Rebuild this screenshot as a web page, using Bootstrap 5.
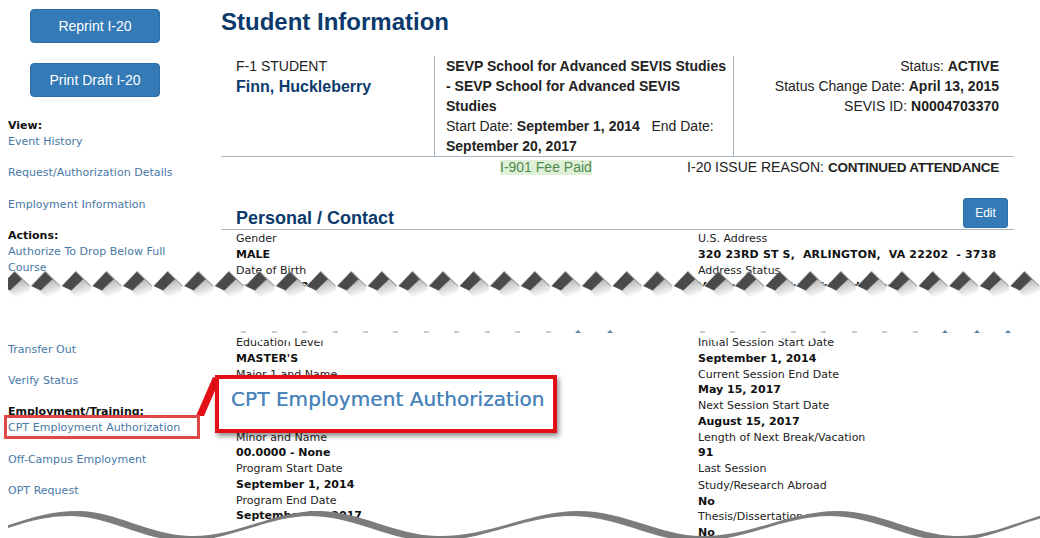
<!DOCTYPE html>
<html lang="en">
<head>
<meta charset="utf-8">
<title>Student Information</title>
<link rel="stylesheet" href="https://cdn.jsdelivr.net/npm/bootstrap@5.3.0/dist/css/bootstrap.min.css">
<style>
html,body{height:538px;overflow:hidden;background:#fff}
body{position:relative;font-family:"Liberation Sans",Arial,sans-serif;font-size:14px;color:#222}
.side-col{width:221px;flex:none;padding:9px 30px 0 8px;font-family:"DejaVu Sans",Verdana,sans-serif;font-size:11px;line-height:16px}
.side-btn{display:block;width:130px;height:34px;margin:0 0 20px 22px;padding:0;background:#337ab7;border:1px solid #2e6da4;border-radius:4px;color:#fff;font-family:"Liberation Sans",Arial,sans-serif;font-size:14px;line-height:32px}
.side-head{font-weight:700;color:#111;display:block}
.side-link{display:block;color:#4878a6;text-decoration:none;margin-bottom:15.25px;letter-spacing:.03px}
.side-gap{height:50.75px}
.side-first{margin-top:21px}
.main-col{width:793px;flex:none;padding-top:7px}
.page-title{font-size:24px;line-height:30px;font-weight:700;color:#0c3a6c;margin:0 0 19px}
.info-band{height:101px;border-bottom:1px solid #a9b5c0;line-height:20px}
.info-a{width:213px;padding-left:15px}
.info-b{width:299px;padding-left:11px;padding-right:0;border-left:1px solid #a9b5c0}
.info-c{width:281px;padding-right:15px;border-left:1px solid #a9b5c0;text-align:right}
.info-name{font-size:16px;line-height:22px;font-weight:700;color:#0c3a6c}
.fee-band{height:20px;line-height:20px;padding:0 15px 0 279px}
.fee-tag{background:#dff0d8;color:#4f8a4f;line-height:15px;display:inline-block;align-self:center}
.reason-val{font-size:13.5px;letter-spacing:-.22px}
.sect-head{margin-top:21px;height:32px;border-bottom:1px solid #a9b5c0;padding:0 6px 0 15px}
.sect-title{font-size:18px;line-height:22px;font-weight:700;color:#0c3a6c;margin:0;align-self:flex-end}
.edit-btn{width:45px;height:30px;padding:0;background:#337ab7;border:1px solid #2e6da4;border-radius:3px;color:#fff;font-size:12px;line-height:28px}
.data-grid{font-family:"DejaVu Sans",Verdana,sans-serif;font-size:11px;color:#222}
.data-grid b{display:block;color:#111}
.data-grid span{display:block}
.data-l{width:477px;padding-left:15px}
.data-r{width:316px}
.top-grid{line-height:16px;margin-top:1px}
.low-grid{line-height:15.75px;margin-top:40.2px}
.data-grid .addr-val{letter-spacing:.15px}
.extra-gap{margin-bottom:1px}
.tear-art{position:absolute;left:0;top:0;pointer-events:none}
.pick-box{position:absolute;left:4px;top:415px;width:196px;height:24px;border:3px solid #e04848}
.zoom-box{position:absolute;left:215px;top:375px;width:342px;height:58px;background:#fff;border:4px solid #e30f17;box-shadow:2px 3px 5px rgba(0,0,0,.45);font-family:"DejaVu Sans",Verdana,sans-serif;font-size:20px;line-height:40px;letter-spacing:.07px;color:#4a84bb;padding-left:12px;white-space:nowrap;text-shadow:0 0 .4px #4a84bb}
</style>
</head>
<body>
<div class="d-flex">
  <nav class="side-col">
    <a class="btn side-btn" href="#">Reprint I-20</a>
    <a class="btn side-btn" href="#">Print Draft I-20</a>
    <strong class="side-head side-first">View:</strong>
    <a class="side-link" href="#">Event History</a>
    <a class="side-link" href="#">Request/Authorization Details</a>
    <a class="side-link" href="#">Employment Information</a>
    <strong class="side-head">Actions:</strong>
    <a class="side-link" href="#">Authorize To Drop Below Full Course</a>
    <div class="side-gap"></div>
    <a class="side-link" href="#">Transfer Out</a>
    <a class="side-link" href="#">Verify Status</a>
    <strong class="side-head">Employment/Training:</strong>
    <a class="side-link" href="#">CPT Employment Authorization</a>
    <a class="side-link" href="#">Off-Campus Employment</a>
    <a class="side-link" href="#">OPT Request</a>
  </nav>
  <main class="main-col">
    <h1 class="page-title">Student Information</h1>
    <div class="d-flex info-band">
      <div class="info-a">F-1 STUDENT<div class="info-name">Finn, Huckleberry</div></div>
      <div class="info-b"><strong>SEVP School for Advanced SEVIS Studies<br>- SEVP School for Advanced SEVIS<br>Studies</strong><br>Start Date: <strong>September 1, 2014</strong> &nbsp; End Date: <strong>September 20, 2017</strong></div>
      <div class="info-c">Status: <strong>ACTIVE</strong><br>Status Change Date: <strong>April 13, 2015</strong><br>SEVIS ID: <strong>N0004703370</strong></div>
    </div>
    <div class="d-flex justify-content-between fee-band">
      <span class="fee-tag">I-901 Fee Paid</span>
      <span>I-20 ISSUE REASON: <strong class="reason-val">CONTINUED ATTENDANCE</strong></span>
    </div>
    <div class="d-flex justify-content-between sect-head">
      <h2 class="sect-title">Personal / Contact</h2>
      <button type="button" class="btn edit-btn">Edit</button>
    </div>
    <div class="d-flex data-grid top-grid">
      <div class="data-l"><span>Gender</span><b>MALE</b><span>Date of Birth</span><b>July 4, 1992</b></div>
      <div class="data-r"><span>U.S. Address</span><b class="addr-val">320 23RD ST S,&nbsp; ARLINGTON,&nbsp; VA 22202&nbsp; - 3738</b><span>Address Status</span><b>Validated - Deliverable Address</b></div>
    </div>
    <div class="d-flex data-grid low-grid">
      <div class="data-l"><span>Education Level</span><b>MASTER'S</b><span>Major 1 and Name</span><b class="invisible">11.0101</b><span class="invisible">Major 2</span><b class="invisible">00.0000</b><span>Minor and Name</span><b>00.0000 - None</b><span>Program Start Date</span><b>September 1, 2014</b><span>Program End Date</span><b>September 20, 2017</b></div>
      <div class="data-r"><span>Initial Session Start Date</span><b>September 1, 2014</b><span>Current Session End Date</span><b>May 15, 2017</b><span>Next Session Start Date</span><b>August 15, 2017</b><span>Length of Next Break/Vacation</span><b>91</b><span class="extra-gap">Last Session</span><span>Study/Research Abroad</span><b>No</b><span>Thesis/Dissertation</span><b>No</b></div>
    </div>
  </main>
</div>

<svg class="tear-art" width="1040" height="538" viewBox="0 0 1040 538" aria-hidden="true">
  <defs>
    <linearGradient id="shadeFade" x1="0.35" y1="0.1" x2="0.65" y2="0.9">
      <stop offset="0" stop-color="#b4b4b4"/><stop offset="1" stop-color="#ffffff"/>
    </linearGradient>
    <pattern id="zigTile" patternUnits="userSpaceOnUse" x="29.7" y="270" width="30.6" height="32">
      <polygon points="0,16.5 15.3,1 30.6,16.5 30.6,32 0,32" fill="#fff"/>
      <polygon points="9,20 23,8.5 30.6,15 30.6,21 17,28" fill="url(#shadeFade)"/>
      <polygon points="15.3,1.5 23,9 11,20.5 1.5,16" fill="#4a4a4a"/>
      <path d="M15.3 1 30.6 16.5" stroke="#777" stroke-width=".8" fill="none"/>
    </pattern>
    <pattern id="toothTile" patternUnits="userSpaceOnUse" x="243" y="333" width="30.5" height="9">
      <polygon points="0,0 30.5,0 15.25,9" fill="#fff"/>
    </pattern>
    <clipPath id="waveClip"><rect x="8" y="500" width="1032" height="38"/></clipPath>
  </defs>
  <rect x="8" y="270" width="1032" height="32" fill="url(#zigTile)"/>
  <rect x="0" y="300" width="1040" height="33" fill="#fff"/>
  <rect x="221" y="333" width="819" height="9" fill="url(#toothTile)"/>
  <path d="M241 332h5M272 332h5M302 332h5M333 332h5M363 332h5M393 332h5M424 332h5M454 332h5M485 332h5M515 332h5M546 332h5M700 332h5M730 332h5M761 332h5M791 332h5M821 332h5M852 332h5M882 332h5M913 332h5" stroke="#8a97a3" stroke-width="1" fill="none"/>
  <path d="M575 333l3-3 3 3zM607 333l3-3 3 3zM942 333l3-3 3 3zM974 333l3-3 3 3zM1005 333l3-3 3 3z" fill="#5d7f9e"/>
  <g clip-path="url(#waveClip)">
    <path d="M0 528C30 518 50 511 78 511C115 511 150 535 190 536C235 537 275 511 317 511C360 511 395 535 437 536C490 537 530 511 578 511C625 511 660 536 702 536C750 537 790 511 837 511C880 511 915 535 955 536C990 537 1020 520 1060 510V560H0Z" fill="#7c7c7c"/>
    <path transform="translate(-7 5)" d="M0 528C30 518 50 511 78 511C115 511 150 535 190 536C235 537 275 511 317 511C360 511 395 535 437 536C490 537 530 511 578 511C625 511 660 536 702 536C750 537 790 511 837 511C880 511 915 535 955 536C990 537 1020 520 1060 510V560H0Z" fill="#fff"/>
  </g>
  <polygon points="196,416 204,416 220,379 213,377" fill="#e30f17"/>
</svg>
<div class="pick-box"></div>
<div class="zoom-box">CPT Employment Authorization</div>
<script src="https://cdn.jsdelivr.net/npm/bootstrap@5.3.0/dist/js/bootstrap.bundle.min.js"></script>
</body>
</html>
